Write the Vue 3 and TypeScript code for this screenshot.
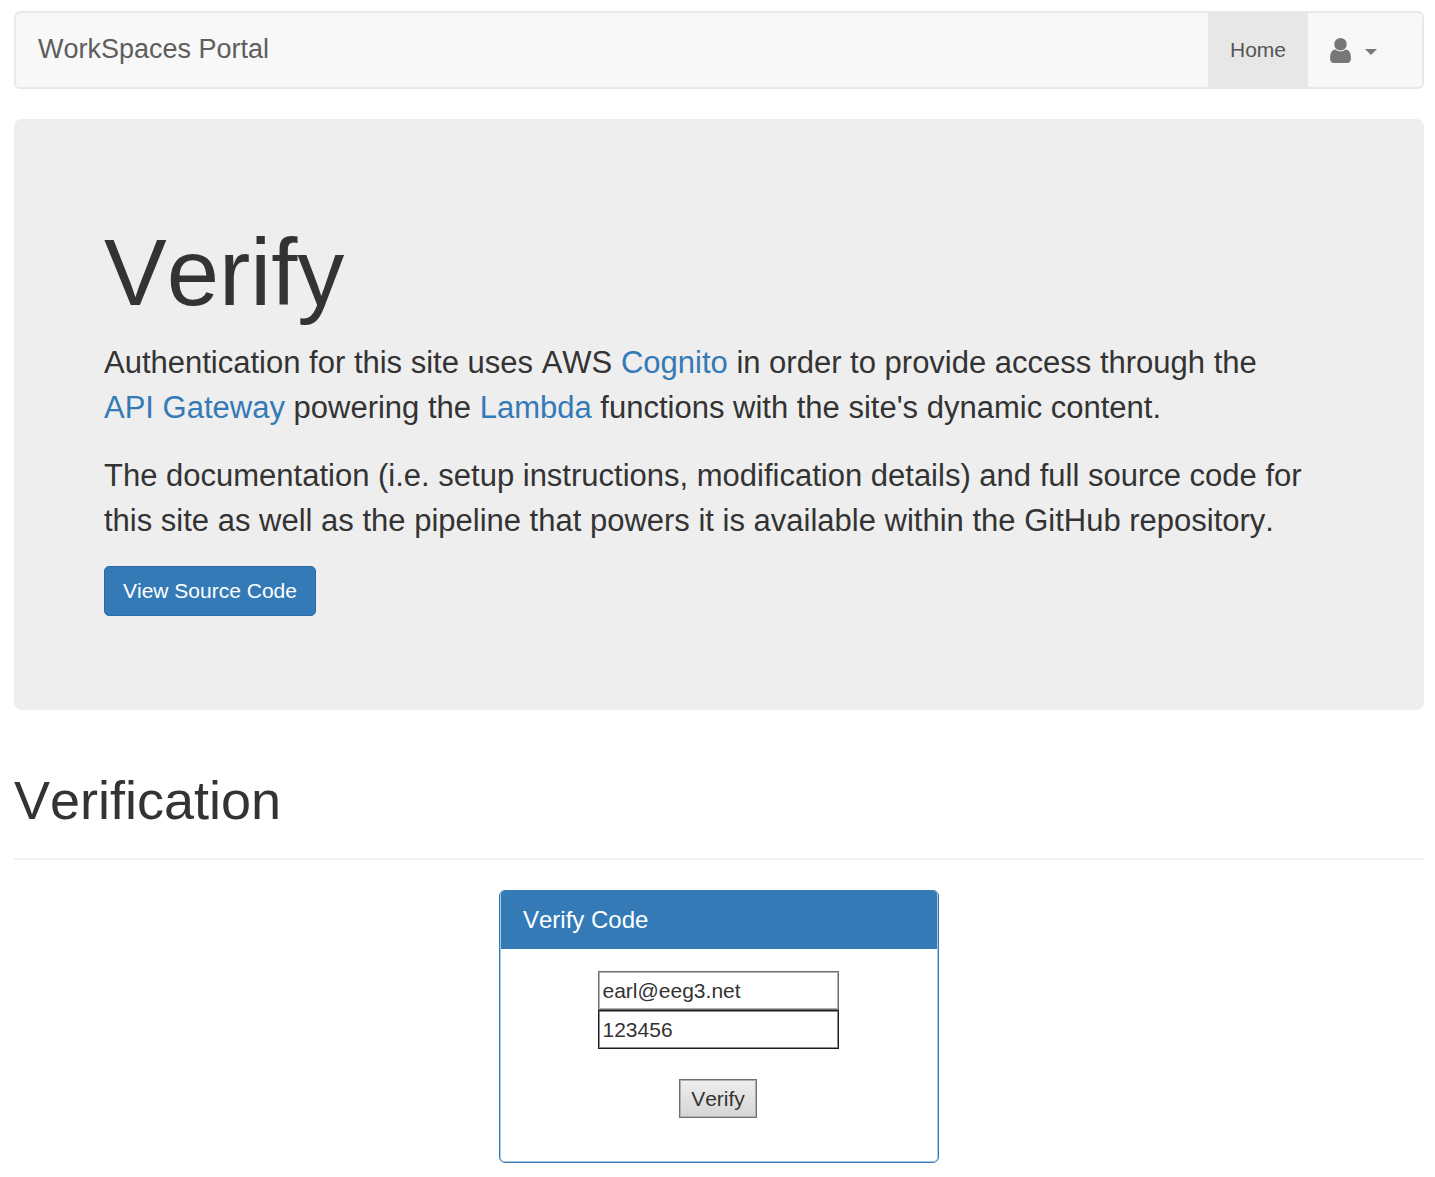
<script setup lang="ts">
import { ref } from 'vue'

const email = ref('earl@eeg3.net')
const code = ref('123456')
</script>

<template>
  <div class="container">
    <nav class="navbar">
      <a class="brand" href="#">WorkSpaces Portal</a>
      <div class="nav-links">
        <a class="nav-item active" href="#">Home</a>
        <a class="nav-item account" href="#" aria-label="Account">
          <svg class="user" viewBox="256 128 1280 1536" aria-hidden="true">
            <path d="M1536 1399q0 109-62.5 187t-150.5 78h-854q-88 0-150.5-78t-62.5-187q0-85 8.5-160.5t31.5-152 58.5-131 94-89 134.5-34.5q131 128 313 128t313-128q76 0 134.5 34.5t94 89 58.5 131 31.5 152 8.5 160.5zm-256-887q0 159-112.5 271.5t-271.5 112.5-271.5-112.5-112.5-271.5 112.5-271.5 271.5-112.5 271.5 112.5 112.5 271.5z" />
          </svg>
          <span class="caret"></span>
        </a>
      </div>
    </nav>

    <header class="jumbotron">
      <h1>Verify</h1>
      <p>
        Authentication for this site uses AWS <a href="#">Cognito</a> in order to provide access through the
        <a href="#">API Gateway</a> powering the <a href="#">Lambda</a> functions with the site's dynamic content.
      </p>
      <p>
        The documentation (i.e. setup instructions, modification details) and full source code for this site as well
        as the pipeline that powers it is available within the GitHub repository.
      </p>
      <a class="btn" href="#">View Source Code</a>
    </header>

    <h2>Verification</h2>

    <section class="panel">
      <h3>Verify Code</h3>
      <form @submit.prevent>
        <input v-model="email" type="text" aria-label="Email" />
        <input v-model="code" class="focused" type="text" aria-label="Verification code" />
        <button type="submit">Verify</button>
      </form>
    </section>
  </div>
</template>

<style>
body {
  margin: 0;
  background: #fff;
}
</style>

<style scoped>
* {
  box-sizing: border-box;
}
.container {
  padding: 11px 11px 14px 14px;
  font-family: "Liberation Sans", Arial, sans-serif;
  font-size: 21px;
  font-kerning: none;
  line-height: 30px;
  color: #333;
}
a {
  color: #337ab7;
  text-decoration: none;
}
.navbar {
  display: flex;
  justify-content: space-between;
  height: 78px;
  margin-bottom: 30px;
  padding-right: 23px;
  border: 2px solid #e9e9e9;
  border-radius: 6px;
  background: #f8f8f8;
}
.brand {
  padding: 21px 22px;
  font-size: 27px;
  color: #5e5e5e;
}
.nav-links {
  display: flex;
}
.nav-item {
  display: flex;
  align-items: center;
  padding: 0 22px;
  color: #555;
}
.active {
  background: #e7e7e7;
}
.user {
  width: 21px;
  height: 25px;
  fill: #777;
}
.caret {
  margin: 3px 0 0 14px;
  border: 6px solid transparent;
  border-top-color: #777;
  border-bottom: 0;
}
.jumbotron {
  padding: 102px 90px 94px;
  border-radius: 8px;
  background: #eee;
}
h1 {
  margin: 0 0 15px;
  font-size: 94px;
  font-weight: 400;
  line-height: 104px;
}
.jumbotron p {
  margin: 0 0 23px;
  font-size: 31px;
  line-height: 45px;
}
.jumbotron p a {
  white-space: nowrap;
}
.btn {
  display: inline-block;
  padding: 9px 18px;
  border: 1px solid #2e6da4;
  border-radius: 5px;
  background: #337ab7;
  color: #fff;
}
h2 {
  margin: 60px 0 30px;
  padding-bottom: 28px;
  border-bottom: 2px solid #f0f0f0;
  font-size: 54px;
  font-weight: 400;
  line-height: 60px;
}
.panel {
  width: 440px;
  margin: 0 auto;
  padding: 1px;
  border: 1px solid #337ab7;
  border-radius: 6px;
  box-shadow: inset 0 0 0 1px #a9c8e2;
}
h3 {
  margin: -1px 0 0;
  padding: 14px 22px;
  border-radius: 4px 4px 0 0;
  background: #337ab7;
  color: #fff;
  font-size: 24px;
  font-weight: 400;
}
form {
  display: flex;
  flex-direction: column;
  align-items: center;
  padding: 22px 24px 43px 22px;
}
input,
button {
  height: 39px;
  border: 1px solid #707070;
  border-radius: 0;
  box-shadow: inset 0 0 0 1px #b0b0b0;
  font: inherit;
  font-kerning: none;
  color: #333;
}
input {
  width: 241px;
  padding: 0 4px;
  background: #fff;
}
.focused {
  border-color: #1c1c1c;
  box-shadow: inset 0 0 0 1px #8e8e8e;
  outline: none;
}
button {
  margin-top: 30px;
  padding: 0 11px;
  background: linear-gradient(#eee, #d5d5d5);
}
</style>
